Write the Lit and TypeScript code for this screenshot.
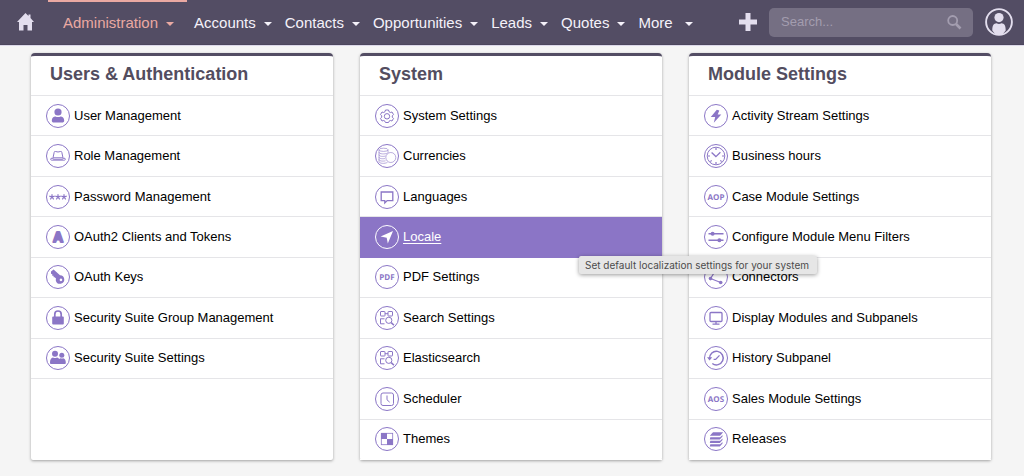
import { LitElement, html, svg, css, nothing, type TemplateResult } from "lit";
import { customElement, property } from "lit/decorators.js";
import { classMap } from "lit/directives/class-map.js";

const asterisk = (cx: number) => svg`<path transform="translate(${cx} 12)" d="M0 0V-2.8M0 0L2.7-.9M0 0L1.7 2.3M0 0L-1.7 2.3M0 0L-2.7-.9" stroke-width="1.2"/>`;
const word = (t: string) => svg`<text class="word" x="12" y="15" text-anchor="middle">${t}</text>`;
const search = svg`<g stroke-width="1">
  <rect x="5.5" y="5.5" width="4.5" height="4.5" rx=".5"/><rect x="13" y="5.5" width="4.5" height="4.5" rx=".5"/>
  <path d="M9.5 12.8H5.5v5h4M5.5 14.5v-1.7M10 7.7h3"/>
  <circle cx="13.8" cy="14.3" r="3.1"/><path d="M16.2 16.6l2.8 2.6" stroke-width="1.5"/></g>`;

const icons: Record<string, TemplateResult> = {
  user: svg`<g class="solid"><circle cx="12" cy="8" r="3.6"/><path d="M5.8 16.4c0-2.600 1.800-4 3.600-4 1.600.9 3.600.9 5.200 0 1.800 0 3.600 1.400 3.600 4 0 1.400-.8 2.200-2 2.200H7.800c-1.200 0-2-.8-2-2.200z"/></g>`,
  hat: svg`<path d="M7 13.800L8.200 8.300Q8.500 7 9.600 7.500q2.400 1 4.800 0 1.100-.5 1.400.8L17 13.800z" stroke-width="1"/><path d="M5 14.300h2l.3 1h9.400l.3-1h2l.3 1.500q-.2.400-1 .4H5.700q-.8 0-1-.4z" stroke-width=".9"/>`,
  password: svg`${asterisk(6)}${asterisk(12)}${asterisk(18)}`,
  letter: svg`<text class="letter" x="12" y="17" text-anchor="middle">A</text>`,
  key: svg`<path class="solid" fill-rule="evenodd" d="M5 6.500L7.600 4.600 14 10.200a4.300 4.300 0 1 1-4.100 5.700 4.300 4.300 0 0 1 .1-2.300L8.700 12.200 7.700 12.300 7.500 10.800 6.200 10.700 6.300 9.200 5 8.700zM14.900 13.600a1.300 1.300 0 1 0 .1 0z"/>`,
  lock: svg`<path d="M8.800 11V8.200a3.200 3.200 0 0 1 6.400 0V11" stroke-width="1.700"/><rect class="solid" x="6.200" y="10.500" width="11.600" height="8" rx="1"/>`,
  group: svg`<g class="solid"><circle cx="9" cy="7.700" r="3"/><circle cx="15.800" cy="9.200" r="2.500"/><path d="M4 16.400c0-3 1.200-4.600 3-4.900 1.300.8 2.700.8 4 0 1 .2 1.700.8 2.200 1.500.4-.4 1-.7 1.600-.8.8.5 1.600.5 2.400 0 1.800.3 2.600 2 2.600 4.600 0 .9-.4 1.200-1.100 1.200H5.300c-.9 0-1.300-.5-1.300-1.600z"/></g>`,
  gear: svg`<path d="M10.500 6h3l.5 1.700 1.300.8 1.700-.5 1.500 2.600-1.200 1.200v1.400l1.200 1.200-1.500 2.600-1.700-.5-1.300.8-.5 1.200h-3l-.5-1.200-1.300-.8-1.700.5-1.500-2.600 1.200-1.200v-1.400L5.500 10.600 7 8l1.700.5 1.300-.8z"/><circle cx="12" cy="12.300" r="2.700"/>`,
  coins: svg`<g stroke-width=".6"><ellipse cx="8.500" cy="5.800" rx="4.500" ry="1.600"/><path d="M4 5.800v11.700c0 2.200 6 2.400 8.500.8M13 5.800v3M4 8.200c0 2 6 2.200 8.500.9M4 10.600c0 2 4.500 2.100 6.500 1.400M4 13c0 1.900 4 2 6 1.500M4 15.300c0 1.900 4 2.100 6.500 1.500"/><circle cx="15.800" cy="13.500" r="5"/></g>`,
  speech: svg`<path d="M6.200 7h11.600v8.600h-5.600l-2.400 2.300v-2.300H6.200z" stroke-width="1.300"/>`,
  locale: svg`<path class="solid" d="M18 6L12.800 18.400 11.700 12.700 5.600 11.600z"/>`,
  pdf: word("PDF"),
  search,
  clock: svg`<rect x="6" y="6" width="12.500" height="12.500" rx="2"/><path d="M12 8.500v4.300l2.700 2.400"/>`,
  themes: svg`<rect x="6.300" y="6.300" width="11.400" height="11.400" stroke-width=".8"/><path class="solid" d="M6 6h6v6h6v6h-6v-6H6z"/>`,
  bolt: svg`<path class="solid" d="M12.800 5.800L6.800 13h4.400l-1.400 5.800 7.500-8.300h-3.600l1.600-3.900z"/>`,
  hours: svg`<circle cx="12" cy="12" r="8.800"/><path d="M7.600 8.600l4.300 4 4.500-4.300" stroke-width="1.300"/><path d="M12 4v2M12 18v2M4 12h2M18 12h2M6.400 17.600l1.200-1.200M17.600 17.600l-1.200-1.200" stroke-width="1.200"/>`,
  aop: word("AOP"),
  filters: svg`<path d="M4.500 8.700h15M4.500 15.300h15" stroke-width="1.500"/><circle class="solid" cx="8.600" cy="8.700" r="2"/><circle class="solid" cx="15.400" cy="15.300" r="2"/>`,
  nodes: svg`<path d="M6.500 13.600L11.800 5M6.500 13.600l10.200 3.900" stroke-width="1.100"/><circle class="solid" cx="6.500" cy="13.600" r="1.800"/><circle class="solid" cx="16.700" cy="17.500" r="1.800"/><circle class="solid" cx="11.800" cy="5" r="1.500"/>`,
  display: svg`<rect x="6" y="6.500" width="12" height="9" rx="1" stroke-width="1.300"/><path d="M12 15.500v2.500M8.500 18.200h7" stroke-width="1.300"/>`,
  history: svg`<path d="M5.600 12.500a6.800 6.800 0 1 1 2.700 5" stroke-width="1.500"/><path class="solid" d="M3 11.200h5.200L5.600 14.600z"/><path d="M12 13l3.500-3.600M9.600 13.300h2.600" stroke-width="1.200"/>`,
  aos: word("AOS"),
  layers: svg`<g class="solid"><path d="M9 5.200h10.200l-3.200 3.600H5.800z"/><path d="M6.300 10.200h9.900l2.300-2.200v1.600l-2.700 2.900H5.800z"/><path d="M6.300 13.700h9.900l2.300-2.200v1.600l-2.700 2.900H5.800z"/><path d="M6.300 17.200h9.900l2.300-2.200v1.600l-2.700 2.900H5.800z"/></g>`,
};

interface Entry { icon: string; label: string; tip?: string }

const panels: { title: string; entries: Entry[] }[] = [
  { title: "Users & Authentication", entries: [
    { icon: "user", label: "User Management" },
    { icon: "hat", label: "Role Management" },
    { icon: "password", label: "Password Management" },
    { icon: "letter", label: "OAuth2 Clients and Tokens" },
    { icon: "key", label: "OAuth Keys" },
    { icon: "lock", label: "Security Suite Group Management" },
    { icon: "group", label: "Security Suite Settings" },
  ] },
  { title: "System", entries: [
    { icon: "gear", label: "System Settings" },
    { icon: "coins", label: "Currencies" },
    { icon: "speech", label: "Languages" },
    { icon: "locale", label: "Locale", tip: "Set default localization settings for your system" },
    { icon: "pdf", label: "PDF Settings" },
    { icon: "search", label: "Search Settings" },
    { icon: "search", label: "Elasticsearch" },
    { icon: "clock", label: "Scheduler" },
    { icon: "themes", label: "Themes" },
  ] },
  { title: "Module Settings", entries: [
    { icon: "bolt", label: "Activity Stream Settings" },
    { icon: "hours", label: "Business hours" },
    { icon: "aop", label: "Case Module Settings" },
    { icon: "filters", label: "Configure Module Menu Filters" },
    { icon: "nodes", label: "Connectors" },
    { icon: "display", label: "Display Modules and Subpanels" },
    { icon: "history", label: "History Subpanel" },
    { icon: "aos", label: "Sales Module Settings" },
    { icon: "layers", label: "Releases" },
  ] },
];

const modules = ["Administration", "Accounts", "Contacts", "Opportunities", "Leads", "Quotes", "More"];

@customElement("top-bar")
class TopBar extends LitElement {
  static styles = css`
    :host { display: block; font-family: "Liberation Sans", Arial, sans-serif; }
    .bar { display: flex; align-items: center; height: 45px; box-sizing: border-box; padding: 0 11px 0 17px; background: #534d64; border-bottom: 1px solid #4c465d; box-shadow: 0 1px 0 #dcd8e9; }
    .home { display: flex; margin-right: 14px; }
    .menu { display: flex; align-self: stretch; list-style: none; margin: 0; padding: 0; flex: 1; }
    .item { display: flex; padding-right: 13px; }
    .item.current { padding-left: 15px; margin-right: 7px; box-shadow: inset 0 2px #eaa9a2; }
    .link { display: flex; align-items: center; gap: 8px; color: #f5f2fa; font-size: 15px; line-height: 18px; padding-top: 2px; text-decoration: none; }
    .current .link { color: #eaa9a2; }
    .more .link { gap: 12px; }
    .caret { border: 4px solid transparent; border-top-color: currentColor; border-bottom: 0; margin-top: 2px; }
    .create, .profile { display: flex; padding: 0; border: 0; background: none; cursor: pointer; }
    .create { margin-right: 12px; }
    .search { display: flex; align-items: center; width: 204px; height: 29px; margin-right: 12px; box-sizing: border-box; padding: 0 11px 0 12px; border-radius: 5px; background: #756f83; }
    .query { flex: 1; min-width: 0; padding: 0; border: 0; outline: 0; background: none; color: #f5f2fa; font: 13px/18px "Liberation Sans", Arial, sans-serif; }
    .query::placeholder { color: #a39daf; opacity: 1; }
    .icon { display: block; fill: #e3deee; }
    .lens { fill: none; stroke: #a39daf; }
  `;
  render() {
    return html`<header class="bar">
      <a class="home" href="#home" aria-label="Home"><svg class="icon" width="17" height="18" viewBox="0 0 17 18"><path d="M8.500 0L11.500 3V1.500h2V5L17 8.900h-2V17.500h-4.500V12h-4v5.500H2V8.900H0z"/></svg></a>
      <ul class="menu">
        ${modules.map((m, i) => html`<li class=${classMap({ item: true, current: i === 0, more: m === "More" })}>
          <a class="link" href="#${m.toLowerCase()}">${m}<span class="caret"></span></a></li>`)}
      </ul>
      <button class="create" aria-label="Create"><svg class="icon" width="18" height="18" viewBox="0 0 18 18"><path d="M6.500 0h5v6.500H18v5h-6.500V18h-5v-6.500H0v-5h6.500z"/></svg></button>
      <form class="search" role="search">
        <input class="query" type="search" aria-label="Search" placeholder="Search...">
        <svg class="lens" width="15" height="15" viewBox="0 0 15 15"><circle cx="5.700" cy="5.500" r="4.500" stroke-width="1.800"/><path d="M9 9l4.500 4.500" stroke-width="2.600"/></svg>
      </form>
      <button class="profile" aria-label="Profile"><svg class="icon" width="28" height="28" viewBox="0 0 28 28"><circle cx="14" cy="14" r="12.900" fill="none" stroke="#e3deee" stroke-width="1.900"/><circle cx="14" cy="9.600" r="4.600"/><path d="M7.300 22.500c0-5 1.300-7.200 4.300-7.300 1.500.9 3.300.9 4.800 0 3 .1 4.300 2.300 4.300 7.300L17.500 26.500h-7z"/></svg></button>
    </header>`;
  }
}

@customElement("admin-panel")
class AdminPanel extends LitElement {
  @property({ attribute: false }) heading = "";
  @property({ attribute: false }) entries: Entry[] = [];
  static styles = css`
    :host { display: block; font-family: "Liberation Sans", Arial, sans-serif; }
    .card { height: 100%; box-sizing: border-box; border-top: 3px solid #534d64; border-radius: 4px 4px 2px 2px; background: #fff; box-shadow: 0 1px 3px rgba(0, 0, 0, 0.35); }
    .title { margin: 0; padding: 6px 19px 9px; color: #534d5f; font-size: 18px; line-height: 24px; font-weight: 700; border-bottom: 1px solid #e5e5e8; }
    .list { display: grid; grid-template-rows: repeat(9, 1fr); min-height: 364px; margin: 0; padding: 0; list-style: none; }
    .row { position: relative; display: flex; align-items: center; box-sizing: border-box; padding: 0 15px; border-bottom: 1px solid #e5e5e8; }
    .row:nth-child(9) { border-bottom-color: #fff; }
    .link { display: flex; align-items: center; gap: 4px; color: #000; font-size: 13px; line-height: 18px; text-decoration: none; }
    .icon { flex: none; width: 24px; height: 24px; color: #8b76c6; fill: none; stroke: currentColor; }
    .solid { fill: currentColor; stroke: none; }
    .word { fill: currentColor; stroke: none; font: 700 8px "Open Sans", sans-serif; text-rendering: geometricPrecision; }
    .letter { fill: currentColor; stroke-width: 2; stroke-linejoin: round; font: 700 14px "Liberation Sans", sans-serif; }
    .row.active { background: #8b75c6; border-color: #8b75c6; }
    .active .link, .active .icon { color: #fff; }
    .active .label { text-decoration: underline; text-underline-offset: 2px; }
    .tip { position: absolute; z-index: 2; top: 39px; left: 219px; padding: 1px 8px 1px 6px; border-radius: 2px; background: #e6e6e6; color: #4c4c4c; box-shadow: 0 1px 4px rgba(0, 0, 0, 0.4); font: 10px/16px Inter, sans-serif; white-space: nowrap; }
  `;
  render() {
    return html`<section class="card">
      <h2 class="title">${this.heading}</h2>
      <ul class="list">
        ${this.entries.map((e) => html`<li class=${classMap({ row: true, active: !!e.tip })}>
          <a class="link" href="#${e.label.toLowerCase().replace(/\s+/g, "-")}">
            <svg class="icon" viewBox="0 0 24 24" aria-hidden="true"><circle cx="12" cy="12" r="11.500"/>${icons[e.icon]}</svg>
            <span class="label">${e.label}</span>
          </a>
          ${e.tip ? html`<span class="tip" role="tooltip">${e.tip}</span>` : nothing}
        </li>`)}
      </ul>
    </section>`;
  }
}

@customElement("app-root")
class AppRoot extends LitElement {
  static styles = css`
    :host { display: block; min-height: 100vh; background: #f5f5f5; }
    .panels { display: grid; grid-template-columns: repeat(3, minmax(0, 1fr)); gap: 27px; padding: 8px 33px 16px 31px; }
    .lifted { position: relative; z-index: 1; }
  `;
  render() {
    return html`<top-bar></top-bar>
      <main class="panels">
        ${panels.map((p) => html`<admin-panel class=${classMap({ lifted: p.entries.some((e) => e.tip) })} .heading=${p.title} .entries=${p.entries}></admin-panel>`)}
      </main>`;
  }
}
